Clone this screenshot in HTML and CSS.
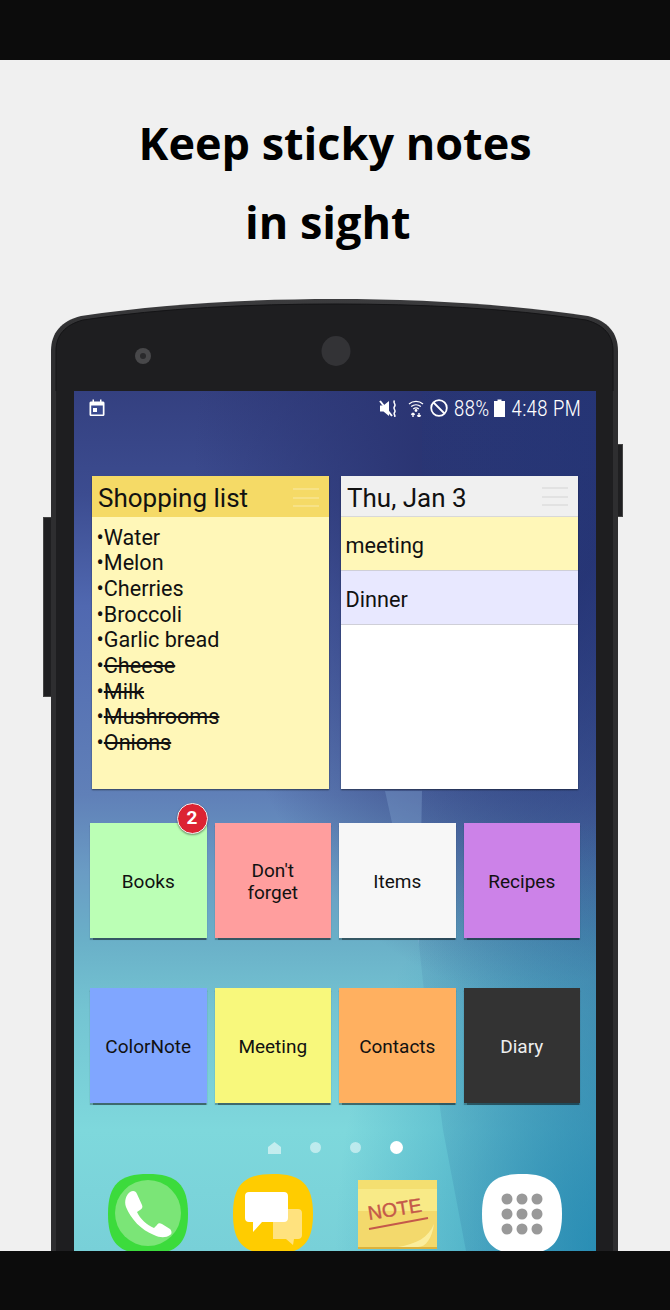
FILE: index.html
```html
<!DOCTYPE html>
<html lang="en">
<head>
    <meta charset="UTF-8">
    <meta name="viewport" content="width=device-width, initial-scale=1.0">
    <title>Keep sticky notes in sight</title>
    <link rel="stylesheet" href="styles.css">
</head>
<body>
    <div class="bar"></div>

    <main class="stage">
        <h1 class="headline">
            <span class="line-one">Keep sticky notes</span>
            <span class="line-two">in sight</span>
        </h1>

        <div class="phone">
            <span class="side-key left-key"></span>
            <span class="side-key right-key"></span>

            <svg class="phone-top" viewBox="0 0 567 92" preserveAspectRatio="none">
                <defs>
                    <linearGradient id="rim" x1="0" y1="0" x2="0" y2="1">
                        <stop offset="0" stop-color="#3c3c3e"/>
                        <stop offset="0.4" stop-color="#2e2e30"/>
                    </linearGradient>
                </defs>
                <path d="M0 92V52C0 34 10 22 30 17C110 5 200 0 284 0C368 0 458 5 537 17C557 22 567 34 567 52V92Z" fill="url(#rim)"/>
                <path d="M5 92V52C5 36 14 26 32 21C112 9 200 5 284 5C368 5 456 9 535 21C553 26 562 36 562 52V92" fill="#1e1e20" stroke="#141416"/>
                <circle cx="92" cy="57" r="8" fill="#48484a"/>
                <circle cx="92" cy="57" r="3" fill="#2a2a2c"/>
                <ellipse cx="285" cy="52" rx="14.500" ry="15" fill="#333336"/>
            </svg>

            <div class="phone-body">
                <div class="screen">
                    <svg class="wallpaper" viewBox="0 0 522 860">
                        <defs>
                            <linearGradient id="sky" x1="0" y1="0" x2="0" y2="1">
                                <stop offset="0" stop-color="#344080"/>
                                <stop offset="0.12" stop-color="#3c4c90"/>
                                <stop offset="0.25" stop-color="#5068b0"/>
                                <stop offset="0.47" stop-color="#6080b8"/>
                                <stop offset="0.56" stop-color="#6a9cc4"/>
                                <stop offset="0.64" stop-color="#6ab0c8"/>
                                <stop offset="0.72" stop-color="#74c4d2"/>
                                <stop offset="0.86" stop-color="#7ed8dc"/>
                                <stop offset="1" stop-color="#78d0d8"/>
                            </linearGradient>
                            <linearGradient id="shade" x1="0" y1="0" x2="1" y2="0">
                                <stop offset="0" stop-color="#1c3c80" stop-opacity="0.08"/>
                                <stop offset="1" stop-color="#1c3478" stop-opacity="0.35"/>
                            </linearGradient>
                            <radialGradient id="topdark" cx="0.85" cy="0.08" r="0.62">
                                <stop offset="0.3" stop-color="#2a3472" stop-opacity="0.95"/>
                                <stop offset="1" stop-color="#2a3472" stop-opacity="0"/>
                            </radialGradient>
                            <radialGradient id="deep" cx="1" cy="1" r="0.5">
                                <stop offset="0" stop-color="#1a8ab4" stop-opacity="0.75"/>
                                <stop offset="1" stop-color="#1a8ab4" stop-opacity="0"/>
                            </radialGradient>
                        </defs>
                        <rect width="522" height="860" fill="url(#sky)"/>
                        <rect width="522" height="860" fill="url(#topdark)"/>
                        <path d="M348 0V400L345 554L350 600L365 709L369 739L392 860H522V0Z" fill="url(#shade)"/>
                        <path d="M311 400H348L345 554Z" fill="#8ab0dc" opacity="0.3"/>
                        <rect width="522" height="860" fill="url(#deep)"/>
                    </svg>

                    <div class="status">
                        <svg class="ic-cal" viewBox="0 0 16 18">
                            <path d="M0.500 4C0.500 3 1.300 2.500 2.200 2.500H3.500V0.500H5V2.500H11V0.500H12.500V2.500H13.800C14.700 2.500 15.500 3 15.500 4V15.500C15.500 16.500 14.700 17 13.800 17H2.200C1.300 17 0.500 16.500 0.500 15.500Z" fill="#fff"/>
                            <rect x="2.200" y="6.500" width="11.600" height="9" fill="#3a4a8f"/>
                            <rect x="4" y="9" width="4" height="4" fill="#fff"/>
                        </svg>
                        <div class="status-right">
                            <svg class="ic-mute" viewBox="0 0 20 17">
                                <path d="M1 5.500H4.500L10 1V16L4.500 11.500H1Z" fill="#fff"/>
                                <path d="M1 1L13 16" stroke="#fff" stroke-width="2"/>
                                <path d="M15.500 0.500C13.500 3 17.500 4 15.500 6.500C13.500 9 17.500 10 15.500 12.500C14 14.500 17 15 15.500 17" fill="none" stroke="#fff" stroke-width="1.500"/>
                            </svg>
                            <svg class="ic-wifi" viewBox="0 0 16 18">
                                <path d="M1 5C5 1.500 11 1.500 15 5M3.200 7.500C6 5.200 10 5.200 12.800 7.500M5.200 10C6.800 8.800 9.200 8.800 10.800 10" fill="none" stroke="#fff" stroke-width="1.300"/>
                                <circle cx="8" cy="11.500" r="1.400" fill="#fff"/>
                                <path d="M5 18V14M5 14L3.300 15.800M5 14L6.700 15.800M11 14V18M11 18L9.300 16.200M11 18L12.700 16.200" fill="none" stroke="#fff" stroke-width="1.400"/>
                            </svg>
                            <svg class="ic-block" viewBox="0 0 18 18">
                                <circle cx="9" cy="9" r="7.800" fill="none" stroke="#fff" stroke-width="1.800"/>
                                <path d="M3.500 3.500L14.500 14.500" stroke="#fff" stroke-width="1.800"/>
                            </svg>
                            <span class="battery-pct">88%</span>
                            <svg class="ic-batt" viewBox="0 0 11 18">
                                <path d="M3.500 0.500H7.500V2H11V18H0V2H3.500Z" fill="#fff"/>
                            </svg>
                            <span class="clock">4:48 PM</span>
                        </div>
                    </div>

                    <div class="widgets">
                        <section class="widget note-widget">
                            <header class="widget-head head-yellow">
                                <span>Shopping list</span>
                                <span class="burger"><i></i><i></i><i></i></span>
                            </header>
                            <ul class="checklist">
                                <li>Water</li>
                                <li>Melon</li>
                                <li>Cherries</li>
                                <li>Broccoli</li>
                                <li>Garlic bread</li>
                                <li><s>Cheese</s></li>
                                <li><s>Milk</s></li>
                                <li><s>Mushrooms</s></li>
                                <li><s>Onions</s></li>
                            </ul>
                        </section>
                        <section class="widget cal-widget">
                            <header class="widget-head head-grey">
                                <span>Thu, Jan 3</span>
                                <span class="burger"><i></i><i></i><i></i></span>
                            </header>
                            <div class="event event-yellow">meeting</div>
                            <div class="event event-blue">Dinner</div>
                        </section>
                    </div>

                    <div class="tiles">
                        <div class="tile green">Books<span class="badge">2</span></div>
                        <div class="tile pink">Don't<br>forget</div>
                        <div class="tile white">Items</div>
                        <div class="tile purple">Recipes</div>
                    </div>
                    <div class="tiles tiles-second">
                        <div class="tile blue">ColorNote</div>
                        <div class="tile yellow">Meeting</div>
                        <div class="tile orange">Contacts</div>
                        <div class="tile dark">Diary</div>
                    </div>

                    <div class="pager">
                        <svg class="pager-home" viewBox="0 0 13 12"><path d="M0 5L6.500 0L13 5V12H0Z" fill="#fff"/></svg>
                        <span class="dot"></span>
                        <span class="dot"></span>
                        <span class="dot on"></span>
                    </div>

                    <div class="dock">
                        <svg class="app" viewBox="0 0 80 80">
                            <path d="M40 0C68 0 80 10 80 40C80 70 68 80 40 80C12 80 0 70 0 40C0 10 12 0 40 0Z" fill="#3cdb3c"/>
                            <circle cx="40" cy="39" r="33" fill="#7be577"/>
                            <path d="M22 18C25 16 28 17 29 20L34 31C35 33 34 35 32 36L29 38C32 45 39 51 46 54L49 51C50 49 52 49 54 50L62 55C64 57 64 60 62 61C58 64 52 64 46 61C33 56 23 45 18 33C16 27 18 21 22 18Z" fill="#fff"/>
                        </svg>
                        <svg class="app" viewBox="0 0 80 80">
                            <path d="M40 0C68 0 80 10 80 40C80 70 68 80 40 80C12 80 0 70 0 40C0 10 12 0 40 0Z" fill="#ffcc00"/>
                            <path d="M40 35H65C67.500 35 69 36.500 69 39V61C69 63.500 67.500 65 65 65H61L60 71L53 65H40Z" fill="#ffe27e"/>
                            <path d="M16 18H51C53.500 18 55 19.500 55 22V44C55 46.500 53.500 48 51 48H29L20 58V48H16C13.500 48 12 46.500 12 44V22C12 19.500 13.500 18 16 18Z" fill="#fff"/>
                        </svg>
                        <svg class="app-note" viewBox="0 0 79 69">
                            <rect width="79" height="69" fill="#dcb23c"/>
                            <rect width="79" height="67" fill="#f3d96c"/>
                            <rect y="9" width="79" height="22" fill="#f9ee8e" opacity="0.8"/>
                            <rect width="79" height="9" fill="#f4df70"/>
                            <path d="M40 67C58 64 70 58 76 44C74 58 68 67 60 67Z" fill="#fbee9c"/>
                            <text class="note-word" x="11" y="40" transform="rotate(-9 11 40)">NOTE</text>
                            <path d="M11 49L70 38" fill="none" stroke="#c4584a" stroke-width="1.800"/>
                        </svg>
                        <svg class="app" viewBox="0 0 80 80">
                            <path d="M40 0C68 0 80 10 80 40C80 70 68 80 40 80C12 80 0 70 0 40C0 10 12 0 40 0Z" fill="#fff"/>
                            <g fill="#999">
                                <circle cx="25" cy="25" r="5.500"/><circle cx="40" cy="25" r="5.500"/><circle cx="55" cy="25" r="5.500"/>
                                <circle cx="25" cy="40" r="5.500"/><circle cx="40" cy="40" r="5.500"/><circle cx="55" cy="40" r="5.500"/>
                                <circle cx="25" cy="55" r="5.500"/><circle cx="40" cy="55" r="5.500"/><circle cx="55" cy="55" r="5.500"/>
                            </g>
                        </svg>
                    </div>
                </div>
            </div>
        </div>
    </main>

    <div class="bar bar-bottom"></div>
</body>
</html>
```

FILE: styles.css
```css
html, body {
    margin: 0;
    padding: 0;
}

body {
    width: 670px;
    height: 1310px;
    overflow: hidden;
    background: #f0f0f0;
    font-family: Roboto, Arial, sans-serif;
    color: #111;
    position: relative;
}

.bar {
    height: 60px;
    background: #0c0c0c;
}

.bar-bottom {
    position: absolute;
    left: 0;
    right: 0;
    bottom: 0;
    height: 59px;
}

.stage {
    height: 1191px;
    overflow: hidden;
    padding-top: 43px;
    box-sizing: border-box;
}

.headline {
    margin: 0;
    font-family: "Open Sans", sans-serif;
    font-size: 45px;
    font-weight: 700;
    line-height: 79px;
    color: #000;
}

.headline span {
    display: block;
}

.line-one {
    padding-left: 138.500px;
}

.line-two {
    padding-left: 245px;
}

.phone {
    position: relative;
    width: 567px;
    margin: 38px 0 0 51px;
}

.phone-top {
    display: block;
    width: 567px;
    height: 92px;
}

.phone-body {
    background: #1e1e20;
    border: solid #2e2e30;
    border-width: 0 5px;
    padding: 0 18px;
    height: 900px;
}

.side-key {
    position: absolute;
    background: #1f1f21;
    box-sizing: border-box;
}

.left-key {
    left: -8px;
    top: 218px;
    width: 8px;
    height: 180px;
    border: solid #444;
    border-width: 1px 0 1px 1px;
}

.right-key {
    right: -5px;
    top: 145px;
    width: 5px;
    height: 73px;
    border: solid #444;
    border-width: 1px 1px 1px 0;
}

.screen {
    position: relative;
    width: 522px;
    height: 900px;
    overflow: hidden;
}

.wallpaper {
    position: absolute;
    left: 0;
    top: 0;
    width: 522px;
    height: 860px;
}

.status {
    position: relative;
    height: 34px;
    display: flex;
    align-items: center;
    justify-content: space-between;
    padding: 0 15px 0 15px;
    color: #fff;
}

.status-right {
    display: flex;
    align-items: center;
    font-size: 22px;
    font-stretch: condensed;
    font-weight: 300;
}

.ic-cal {
    width: 16px;
    height: 18px;
}

.ic-mute {
    width: 20px;
    height: 17px;
    margin-right: 9px;
}

.ic-wifi {
    width: 16px;
    height: 18px;
    margin-right: 6px;
}

.ic-block {
    width: 18px;
    height: 18px;
    margin-right: 6px;
}

.battery-pct {
    margin-right: 5px;
}

.ic-batt {
    width: 11px;
    height: 18px;
    margin-right: 6px;
}

.widgets {
    position: relative;
    display: flex;
    gap: 12px;
    padding: 51px 0 0 18px;
}

.widget {
    width: 237px;
    height: 313px;
    box-shadow: 0 1px 1.500px rgba(0, 0, 0, 0.5);
}

.note-widget {
    background: #fff7b8;
}

.cal-widget {
    background: #fff;
}

.widget-head {
    height: 41px;
    box-sizing: border-box;
    display: flex;
    align-items: center;
    justify-content: space-between;
    padding: 2px 10px 0 6px;
    font-size: 26px;
    color: #111;
}

.head-yellow {
    background: #f5da66;
}

.head-grey {
    background: #f0f0f0;
    border-bottom: 1px solid #d8d8d8;
    padding-top: 4px;
}

.head-grey .burger {
    margin-top: -3px;
}

.burger {
    display: flex;
    flex-direction: column;
    gap: 6.500px;
    width: 26px;
}

.burger i {
    height: 2px;
    background: rgba(255, 255, 255, 0.22);
}

.head-grey .burger i {
    background: rgba(200, 200, 200, 0.35);
}

.checklist {
    list-style: none;
    margin: 0;
    padding: 7.500px 0 0 4.500px;
    font-size: 21.600px;
    line-height: 25.700px;
}

.checklist li::before {
    content: "\2022";
}

.checklist s {
    text-decoration-thickness: 1.500px;
}

.event {
    height: 54px;
    box-sizing: border-box;
    padding: 4px 0 0 4.500px;
    line-height: 50px;
    font-size: 21.700px;
    border-bottom: 1px solid #cfcfd8;
}

.event-yellow {
    background: #fff7b8;
}

.event-blue {
    background: #e8e8ff;
}

.tiles {
    position: relative;
    display: flex;
    gap: 8px;
    padding: 34px 0 0 16px;
}

.tiles-second {
    padding-top: 50px;
}

.tile {
    position: relative;
    width: 116.500px;
    height: 115px;
    box-sizing: border-box;
    padding-top: 2px;
    display: flex;
    align-items: center;
    justify-content: center;
    text-align: center;
    font-size: 19px;
    line-height: 22px;
    box-shadow: 0 1.500px 1px rgba(0, 0, 0, 0.5);
}

.green { background: #bbffb5; }
.pink { background: #ff9e9e; }
.white { background: #f7f7f7; }
.purple { background: #cc82e8; }
.blue { background: #80a6ff; }
.yellow { background: #f8f87c; }
.orange { background: #ffb060; }
.dark { background: #333; color: #eee; }

.badge {
    position: absolute;
    top: -20px;
    right: -1px;
    width: 31px;
    height: 31px;
    box-sizing: border-box;
    border: 1.500px solid #f2f2f2;
    border-radius: 50%;
    background: #dc2332;
    color: #fff;
    font-size: 19px;
    font-weight: 700;
    line-height: 28px;
    box-shadow: 0 1px 2px rgba(0, 0, 0, 0.4);
}

.pager {
    position: relative;
    display: flex;
    align-items: center;
    justify-content: center;
    gap: 29px;
    padding: 38px 0 0 0;
}

.pager-home {
    width: 13px;
    height: 12px;
    opacity: 0.55;
}

.dot {
    width: 11px;
    height: 11px;
    border-radius: 50%;
    background: #fff;
    opacity: 0.5;
}

.dot.on {
    width: 13px;
    height: 13px;
    opacity: 1;
}

.dock {
    position: relative;
    display: flex;
    padding: 20px 0 0 34px;
}

.app {
    width: 80px;
    height: 80px;
    flex: none;
    margin-right: 45px;
}

.app-note {
    width: 79px;
    height: 69px;
    flex: none;
    margin: 6px 45px 0 0;
}

.note-word {
    font-family: "Liberation Sans", sans-serif;
    font-size: 19.500px;
    fill: #c4584a;
    stroke: #c4584a;
    stroke-width: 0.400px;
}
```
